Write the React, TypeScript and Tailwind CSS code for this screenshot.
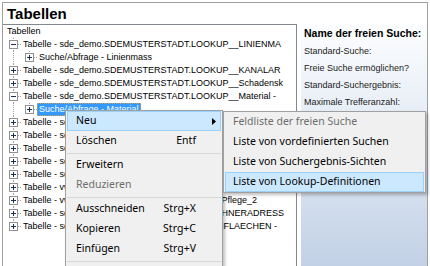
import React from "react";

type Row = {
  level: 0 | 1 | 2;
  text: string;
  exp?: "plus" | "minus";
  selected?: boolean;
  last?: boolean;
};

const ROWS: Row[] = [
  { level: 0, text: "Tabellen" },
  { level: 1, text: "Tabelle - sde_demo.SDEMUSTERSTADT.LOOKUP__LINIENMA", exp: "minus" },
  { level: 2, text: "Suche/Abfrage - Linienmass", exp: "plus" },
  { level: 1, text: "Tabelle - sde_demo.SDEMUSTERSTADT.LOOKUP__KANALAR", exp: "plus" },
  { level: 1, text: "Tabelle - sde_demo.SDEMUSTERSTADT.LOOKUP__Schadensk", exp: "plus" },
  { level: 1, text: "Tabelle - sde_demo.SDEMUSTERSTADT.LOOKUP__Material -", exp: "minus" },
  { level: 2, text: "Suche/Abfrage - Material", exp: "plus", selected: true },
  { level: 1, text: "Tabelle - sde_demo.SDEMUSTERSTADT.LOOKUP__Strassen", exp: "plus" },
  { level: 1, text: "Tabelle - sde_demo.SDEMUSTERSTADT.LOOKUP__Nutzung", exp: "plus" },
  { level: 1, text: "Tabelle - sde_demo.SDEMUSTERSTADT.LOOKUP__Zustand", exp: "plus" },
  { level: 1, text: "Tabelle - sde_demo.SDEMUSTERSTADT.LOOKUP__Eigentum", exp: "plus" },
  { level: 1, text: "Tabelle - sde_demo.SDEMUSTERSTADT.KANALHALTUNG", exp: "plus" },
  { level: 1, text: "Tabelle - vw_demo.SDEMUSTERSTADT.KANALSCHACHT", exp: "plus" },
  { level: 1, text: "Tabelle - vw_demo.SDEMUSTERSTADT.BAUM - Pflege_2", exp: "plus" },
  { level: 1, text: "Tabelle - sde_demo.SDEMUSTERSTADT.EINWOHNERADRESS", exp: "plus" },
  { level: 1, text: "Tabelle - sde_demo.SDEMUSTERSTADT.GRUENFLAECHEN -", exp: "plus", last: true },
];

function Connector({ level, exp, last }: { level: 1 | 2; exp?: "plus" | "minus"; last?: boolean }) {
  const w = level === 1 ? 18 : 34;
  const c = level === 1 ? 10 : 26;
  const dot = { stroke: "#a0a0a0", strokeDasharray: "1 1", strokeWidth: 1 };
  return (
    <svg width={w} height={13} className="block shrink-0" shapeRendering="crispEdges">
      <line x1={10.5} y1={0} x2={10.5} y2={last ? 6 : 13} {...dot} />
      {level === 2 && <line x1={26.5} y1={0} x2={26.5} y2={6} {...dot} />}
      <line x1={c + 5} y1={6.5} x2={w} y2={6.5} {...dot} />
      <rect x={c - 3.5} y={2.5} width={8} height={8} fill="#ffffff" stroke="#919191" />
      <line x1={c - 2} y1={6.5} x2={c + 3} y2={6.5} stroke="#1f2f4f" />
      {exp === "plus" && <line x1={c + 0.5} y1={4} x2={c + 0.5} y2={9} stroke="#1f2f4f" />}
    </svg>
  );
}

function TreeRow({ row }: { row: Row }) {
  return (
    <div className="flex items-center h-[13px] whitespace-nowrap">
      {row.level === 0 ? <div className="w-[2px] shrink-0" /> : <Connector level={row.level} exp={row.exp} last={row.last} />}
      <span
        className={
          row.selected
            ? "px-[2px] bg-[#3399ff] text-white outline outline-1 outline-dotted outline-[#c8a060] -outline-offset-1"
            : "px-[2px] text-black"
        }
      >
        {row.text}
      </span>
    </div>
  );
}

function MItem({
  label,
  shortcut,
  disabled,
  hi,
  arrow,
  pl = "pl-[8px]",
}: {
  label: string;
  shortcut?: string;
  disabled?: boolean;
  hi?: boolean;
  arrow?: boolean;
  pl?: string;
}) {
  return (
    <div
      className={`h-[20px] mx-[1px] flex items-center border whitespace-nowrap ${
        hi ? "bg-[#cce8ff] border-[#99d1ff]" : "border-transparent"
      } ${disabled ? "text-[#6d6d6d]" : "text-black"}`}
    >
      <span className={`${pl} flex-1`}>{label}</span>
      {shortcut && <span>{shortcut}</span>}
      <span className="w-[24px] h-full flex items-center justify-end pr-[4px]">
        {arrow && (
          <svg width="4" height="7" className="block">
            <polygon points="0,0 4,3.5 0,7" fill="#000000" />
          </svg>
        )}
      </span>
    </div>
  );
}

function Sep() {
  return (
    <div className="h-[4px] flex items-center mx-[1px]">
      <div className="h-px w-full bg-[#d7d7d7]" />
    </div>
  );
}

export default function App() {
  return (
    <div className="w-[430px] h-[266px] relative overflow-hidden bg-white pl-[2px] pt-[2px] font-['Liberation_Sans',Arial,sans-serif]">
      <div className="w-[426px] h-[264px] border-l border-t border-r border-[#a0a0a0] flex flex-col">
        <div className="h-[21px] pt-[1px] leading-[20px] pl-[4px] text-[15px] font-bold text-black">Tabellen</div>
        <div className="flex flex-1 min-h-0 gap-[4px]">
          <div className="w-[294px] h-full border-t border-r border-[#828790] bg-white overflow-hidden text-[9px] leading-[13px]">
            {ROWS.map((r, i) => (
              <TreeRow key={i} row={r} />
            ))}
          </div>
          <div className="flex-1 h-full bg-linear-to-b from-[#fdfeff] to-[#c2d1e6] pl-[3px] pt-[1px] whitespace-nowrap overflow-hidden">
            <div className="h-[16px] leading-[16px] text-[10.5px] font-bold text-black">Name der freien Suche:</div>
            <div className="mt-[2px] text-[9px] leading-[17px] text-[#1a1a1a]">
              <div>Standard-Suche:</div>
              <div>Freie Suche ermöglichen?</div>
              <div>Standard-Suchergebnis:</div>
              <div>Maximale Trefferanzahl:</div>
            </div>
          </div>
        </div>
      </div>

      <div className="absolute left-[65px] top-[110px] w-[158px] h-[170px] bg-[#f0f0f0] border border-[#a0a0a0] shadow-[2px_2px_3px_rgba(0,0,0,0.25)] text-[10.5px] font-['Noto_Sans',sans-serif]">
        <MItem label="Neu" hi arrow />
        <MItem label="Löschen" shortcut="Entf" />
        <Sep />
        <MItem label="Erweitern" />
        <MItem label="Reduzieren" disabled />
        <Sep />
        <MItem label="Ausschneiden" shortcut="Strg+X" />
        <MItem label="Kopieren" shortcut="Strg+C" />
        <MItem label="Einfügen" shortcut="Strg+V" />
        <Sep />
      </div>

      <div className="absolute left-[223px] top-[111px] w-[203px] bg-[#f0f0f0] border border-[#a0a0a0] shadow-[2px_2px_3px_rgba(0,0,0,0.25)] text-[10.5px] font-['Noto_Sans',sans-serif]">
        <MItem label="Feldliste der freien Suche" disabled pl="pl-[7px]" />
        <MItem label="Liste von vordefinierten Suchen" pl="pl-[7px]" />
        <MItem label="Liste von Suchergebnis-Sichten" pl="pl-[7px]" />
        <MItem label="Liste von Lookup-Definitionen" hi pl="pl-[7px]" />
      </div>
    </div>
  );
}
